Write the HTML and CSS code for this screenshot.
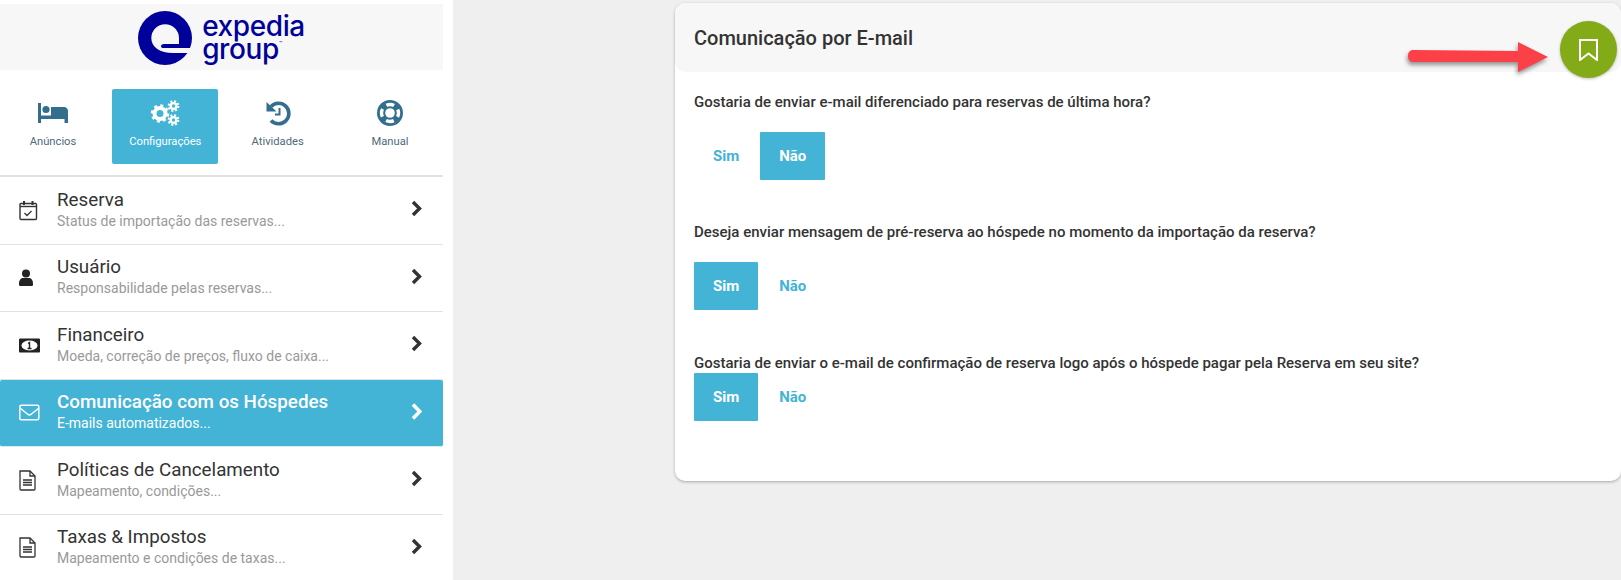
FILE: index.html
```html
<!DOCTYPE html>
<html lang="pt-BR">
<head>
  <meta charset="UTF-8">
  <meta name="viewport" content="width=device-width, initial-scale=1.0">
  <title>Comunicação por E-mail</title>
  <link rel="stylesheet" href="styles.css">
</head>
<body>

  <div class="page">
    <aside class="sidebar">
      <div class="logo-box">
        <svg class="logo-mark" viewBox="0 0 54 54">
          <circle cx="27" cy="27" r="27" fill="#00009a"/>
          <path d="M13.300 27A13.700 13.700 0 0 1 41 27V33H26C24 33 23 34 23 35.200C23 36.500 24 37 26 37H54V42H35C22 42 13.300 36 13.300 27z" fill="#f7f7f7"/>
        </svg>
        <div class="logo-text">
          <span>expedia</span>
          <span>group<sup>™</sup></span>
        </div>
      </div>

      <nav class="tabs">
        <a class="tab">
          <svg class="tab-icon" viewBox="0 0 30 26">
            <g fill="#336e8f">
              <rect x="0" y="3" width="3" height="20"/>
              <circle cx="8" cy="9.500" r="3.600"/>
              <path d="M13 7h13c2.500 0 4 1.800 4 4v12h-3.500v-4H3v-3.500h10z"/>
            </g>
          </svg>
          <span>Anúncios</span>
        </a>
        <a class="tab active">
          <svg class="tab-icon" viewBox="0 0 30 26">
            <g fill="none" stroke="#fff">
              <circle cx="10" cy="13.500" r="5.500" stroke-width="4"/>
              <circle cx="10" cy="13.500" r="8" stroke-width="2.500" stroke-dasharray="3 3.280"/>
              <circle cx="23.500" cy="6" r="2.800" stroke-width="2.300"/>
              <circle cx="23.500" cy="6" r="4.800" stroke-width="2.200" stroke-dasharray="2 1.770"/>
              <circle cx="23.500" cy="20" r="2.800" stroke-width="2.300"/>
              <circle cx="23.500" cy="20" r="4.800" stroke-width="2.200" stroke-dasharray="2 1.770"/>
            </g>
          </svg>
          <span>Configurações</span>
        </a>
        <a class="tab">
          <svg class="tab-icon" viewBox="0 0 26 26">
            <path d="M6 6.500a10.300 10.300 0 1 1 0 14" fill="none" stroke="#336e8f" stroke-width="3.600"/>
            <path d="M1.500 2l10 9.500H1.500z" fill="#336e8f"/>
            <path d="M14.500 8v6.500h-4.500" fill="none" stroke="#336e8f" stroke-width="2"/>
          </svg>
          <span>Atividades</span>
        </a>
        <a class="tab">
          <svg class="tab-icon" viewBox="0 0 26 26">
            <circle cx="13" cy="13" r="13" fill="#336e8f"/>
            <circle cx="13" cy="13" r="8.500" fill="none" stroke="#fff" stroke-width="3.400" stroke-dasharray="8 5.350" stroke-dashoffset="4"/>
            <circle cx="13" cy="13" r="4.800" fill="#fff"/>
          </svg>
          <span>Manual</span>
        </a>
      </nav>

      <ul class="menu">
        <li class="menu-item">
          <svg class="menu-icon" viewBox="0 0 21 21" fill="none" stroke="#333"><rect x="1" y="3.500" width="16.500" height="16" rx="1" stroke-width="1.400"/><path d="M1 6.500h16.500" stroke-width="1.400"/><path d="M5 1v4M13.500 1v4" stroke-width="2"/><path d="M5.500 13l2.500 2.500 4.500-4.500" stroke-width="1.300"/></svg>
          <div class="menu-text"><h3>Reserva</h3><p>Status de importação das reservas...</p></div>
          <svg class="chevron" viewBox="0 0 11 17"><path d="M2 2l6.500 6.500L2 15" fill="none" stroke="#333" stroke-width="3.400"/></svg>
        </li>
        <li class="menu-item">
          <svg class="menu-icon" viewBox="0 0 21 21" fill="#222"><circle cx="7" cy="6.500" r="4"/><path d="M0 16.500c0-3 1.500-5.500 4-5.500h6c2.500 0 4 2.500 4 5.500v1c0 1-.7 1.500-1.500 1.500h-11C.7 19 0 18.500 0 17.500z"/></svg>
          <div class="menu-text"><h3>Usuário</h3><p>Responsabilidade pelas reservas...</p></div>
          <svg class="chevron" viewBox="0 0 11 17"><path d="M2 2l6.500 6.500L2 15" fill="none" stroke="#333" stroke-width="3.400"/></svg>
        </li>
        <li class="menu-item">
          <svg class="menu-icon" viewBox="0 0 21 21"><rect x="0" y="3.500" width="21" height="14" rx="1" fill="#222"/><ellipse cx="10.500" cy="10.500" rx="8" ry="5" fill="#fff"/><path d="M9 8.500l1.500-1v6M8.500 13.500h4" fill="none" stroke="#222" stroke-width="1.400"/></svg>
          <div class="menu-text"><h3>Financeiro</h3><p>Moeda, correção de preços, fluxo de caixa...</p></div>
          <svg class="chevron" viewBox="0 0 11 17"><path d="M2 2l6.500 6.500L2 15" fill="none" stroke="#333" stroke-width="3.400"/></svg>
        </li>
        <li class="menu-item current">
          <svg class="menu-icon" viewBox="0 0 21 21" fill="none" stroke="#fff" stroke-width="1.500"><rect x=".8" y="3.200" width="19" height="14.600" rx="1.500"/><path d="M1 6l8 6.500c1 .8 1.800.8 2.800 0L20 6"/></svg>
          <div class="menu-text"><h3>Comunicação com os Hóspedes</h3><p>E-mails automatizados...</p></div>
          <svg class="chevron" viewBox="0 0 11 17"><path d="M2 1.500l6.800 7-6.800 7" fill="none" stroke="#fff" stroke-width="3.600"/></svg>
        </li>
        <li class="menu-item">
          <svg class="menu-icon" viewBox="0 0 21 21" fill="none" stroke="#333" stroke-width="1.300"><path d="M1 1h10l5 5v13c0 .6-.4 1-1 1H2c-.6 0-1-.4-1-1z"/><path d="M11 1v5h5M4 10h9M4 12.500h9M4 15h9"/></svg>
          <div class="menu-text"><h3>Políticas de Cancelamento</h3><p>Mapeamento, condições...</p></div>
          <svg class="chevron" viewBox="0 0 11 17"><path d="M2 2l6.500 6.500L2 15" fill="none" stroke="#333" stroke-width="3.400"/></svg>
        </li>
        <li class="menu-item">
          <svg class="menu-icon" viewBox="0 0 21 21" fill="none" stroke="#333" stroke-width="1.300"><path d="M1 1h10l5 5v13c0 .6-.4 1-1 1H2c-.6 0-1-.4-1-1z"/><path d="M11 1v5h5M4 10h9M4 12.500h9M4 15h9"/></svg>
          <div class="menu-text"><h3>Taxas &amp; Impostos</h3><p>Mapeamento e condições de taxas...</p></div>
          <svg class="chevron" viewBox="0 0 11 17"><path d="M2 2l6.500 6.500L2 15" fill="none" stroke="#333" stroke-width="3.400"/></svg>
        </li>
      </ul>
    </aside>

    <main class="content">
      <section class="card">
        <header class="card-header">
          <h2>Comunicação por E-mail</h2>
        </header>
        <div class="card-body">
          <div class="question first">
            <p>Gostaria de enviar e-mail diferenciado para reservas de última hora?</p>
            <div class="options">
              <button class="opt">Sim</button>
              <button class="opt selected">Não</button>
            </div>
          </div>
          <div class="question second">
            <p>Deseja enviar mensagem de pré-reserva ao hóspede no momento da importação da reserva?</p>
            <div class="options">
              <button class="opt selected">Sim</button>
              <button class="opt">Não</button>
            </div>
          </div>
          <div class="question third">
            <p>Gostaria de enviar o e-mail de confirmação de reserva logo após o hóspede pagar pela Reserva em seu site?</p>
            <div class="options">
              <button class="opt selected">Sim</button>
              <button class="opt">Não</button>
            </div>
          </div>
        </div>
      </section>
    </main>
  </div>

  <!-- red arrow pointing at the save button -->
  <svg class="arrow" viewBox="0 0 150 44">
    <path d="M6 12L111 13V4l30 15-30 15V24H6c-3 0-5-2.500-5-6s2-6 5-6z" fill="#fb4048"/>
  </svg>
  <button class="fab">
    <svg viewBox="0 0 19 22" fill="none" stroke="#fff" stroke-width="2"><path d="M1 1h17v20l-8.500-6.500L1 21z"/></svg>
  </button>

</body>
</html>
```

FILE: styles.css
```css
* {
  box-sizing: border-box;
}
html, body {
  height: 100%;
}
body {
  margin: 0;
  font-family: Roboto, sans-serif;
  background-color: #efefef;
  color: #333;
  overflow: hidden;
}
.page {
  display: flex;
  height: 580px;
}
.sidebar {
  width: 453px;
  flex-shrink: 0;
  background-color: #fff;
  padding: 4px 10px 0 0;
  overflow: hidden;
}
.logo-box {
  height: 66px;
  background-color: #f7f7f7;
  display: flex;
  justify-content: center;
  align-items: center;
  gap: 10px;
}
.logo-mark {
  width: 54px;
  height: 54px;
  margin-top: 1px;
}
.logo-text {
  display: flex;
  flex-direction: column;
  font-family: Inter, sans-serif;
  font-weight: 500;
  font-size: 28px;
  line-height: 26px;
  letter-spacing: -0.4px;
  color: #00009a;
}
.logo-text span:last-child {
  margin-top: -3px;
}
.logo-text sup {
  font-size: 5px;
  vertical-align: 14px;
  line-height: 0;
}
.tabs {
  display: flex;
  justify-content: space-between;
  padding-top: 19px;
  height: 107px;
  border-bottom: 2px solid #e2e2e2;
}
.tab {
  display: flex;
  flex-direction: column;
  align-items: center;
  height: 75px;
  width: 106px;
  padding-top: 11px;
  border-radius: 2px;
  font-size: 11.2px;
  color: #4f6a7a;
}
.tab.active {
  background-color: #43b3d6;
  color: #fff;
}
.tab-icon {
  width: 30px;
  height: 26px;
  margin-bottom: 9px;
}
.menu {
  list-style: none;
  margin: 0;
  padding: 0;
}
.menu-item {
  display: flex;
  align-items: center;
  height: 67.5px;
  padding: 0 21px 0 19px;
  border-bottom: 1px solid #e2e2e2;
}
.menu-item.current {
  background-color: #43b3d6;
  color: #fff;
  border-radius: 2px;
  border-bottom-color: #d5ecf4;
}
.menu-icon {
  width: 21px;
  height: 21px;
  flex-shrink: 0;
  margin-right: 17px;
}
.menu-text {
  flex: 1;
  margin-top: -1px;
}
.menu-text h3 {
  margin: 0;
  font-size: 18.8px;
  font-weight: 400;
  line-height: 23px;
}
.menu-text p {
  margin: 0;
  font-size: 14px;
  line-height: 19px;
  color: #999;
}
.current h3 {
  font-weight: 500;
}
.current .menu-text p {
  color: #fff;
}
.chevron {
  width: 11px;
  height: 17px;
  margin-top: -3px;
}
.content {
  flex: 1;
  padding: 3px 0 0 222px;
}
.card {
  height: 478px;
  background-color: #fff;
  border-radius: 10px;
  box-shadow: 0 1px 3px rgba(0, 0, 0, 0.3);
}
.card-header {
  height: 69px;
  display: flex;
  align-items: center;
  padding-left: 19px;
  background-color: #f7f7f7;
  border-radius: 10px;
}
.card-header h2 {
  margin: 0;
  font-size: 20px;
  font-weight: 500;
}
.card-body {
  padding: 0 19px;
}
.question p {
  margin: 0;
  font-size: 15px;
  font-weight: 500;
  line-height: 20px;
}
.first {
  padding-top: 20px;
}
.second {
  padding-top: 42px;
}
.third {
  padding-top: 43px;
}
.options {
  display: flex;
  gap: 2px;
  margin-top: 20px;
}
.third .options {
  margin-top: 0;
}
.opt {
  height: 48px;
  border: none;
  border-radius: 1px;
  background: none;
  font-family: Roboto, sans-serif;
  font-size: 15px;
  font-weight: 700;
  color: #43b3d6;
  padding: 0 19px;
  cursor: pointer;
}
.opt.selected {
  background-color: #43b3d6;
  color: #fff;
}
.arrow {
  position: absolute;
  left: 1407px;
  top: 38px;
  width: 150px;
  height: 44px;
  filter: drop-shadow(-1px 3px 2px rgba(0, 0, 0, 0.4));
}
.fab {
  position: absolute;
  left: 1560px;
  top: 21px;
  width: 57px;
  height: 57px;
  border: none;
  border-radius: 50%;
  background-color: #82ab17;
  box-shadow: 0 1px 3px rgba(0, 0, 0, 0.25);
  display: flex;
  align-items: center;
  justify-content: center;
  padding: 0;
}
.fab svg {
  width: 19px;
  height: 22px;
}
```
